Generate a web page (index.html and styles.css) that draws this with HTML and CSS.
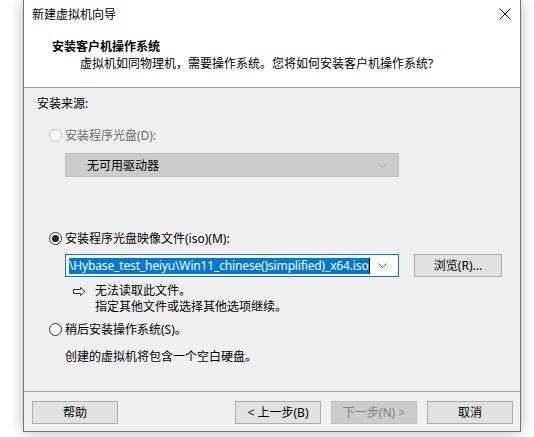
FILE: index.html
```html
<!DOCTYPE html>
<html lang="zh-CN">
<head>
<meta charset="utf-8">
<link rel="stylesheet" href="styles.css">
</head>
<body>
<div class="window">
  <div class="titlebar">
    <span class="title">新建虚拟机向导</span>
    <svg class="close" width="12" height="12" viewBox="0 0 12 12"><path d="M0.5 0.5 L11.5 11.5 M11.5 0.5 L0.5 11.5" stroke="#111" stroke-width="1" fill="none"/></svg>
  </div>
  <div class="header">
    <div class="h-title">安装客户机操作系统</div>
    <div class="h-sub">虚拟机如同物理机，需要操作系统。您将如何安装客户机操作系统?</div>
  </div>
  <div class="content">
    <div class="label">安装来源:</div>
    <div class="radio-row disabled r1">
      <span class="radio"></span><span>安装程序光盘(D):</span>
    </div>
    <div class="select disabled-select">
      <span class="sel-text">无可用驱动器</span>
      <svg class="chev" width="9" height="5" viewBox="0 0 9 5"><path d="M0.5 0.5 L4.5 4.5 L8.5 0.5" stroke="#a8a8a8" fill="none"/></svg>
    </div>
    <div class="radio-row r2">
      <span class="radio checked"></span><span>安装程序光盘映像文件(iso)(M):</span>
    </div>
    <div class="iso-row">
      <div class="combo">
        <span class="hl">\Hybase_test_heiyu\Win11_chinese()simplified)_x64.iso</span><span class="caret"></span>
        <svg class="chev" width="9" height="5" viewBox="0 0 9 5"><path d="M0.5 0.5 L4.5 4.5 L8.5 0.5" stroke="#606060" fill="none"/></svg>
      </div>
      <button class="btn browse">浏览(R)...</button>
    </div>
    <div class="msg">
      <svg class="arrow" width="13" height="9" viewBox="0 0 13 9"><path d="M0.5 2.5 H7.5 V0.5 L12 4.5 L7.5 8.5 V6.5 H0.5 Z" stroke="#333" stroke-width="1" fill="none" stroke-linejoin="miter"/></svg>
      <div class="msg-text">
        <div>无法读取此文件。</div>
        <div>指定其他文件或选择其他选项继续。</div>
      </div>
    </div>
    <div class="radio-row r3">
      <span class="radio"></span><span>稍后安装操作系统(S)。</span>
    </div>
    <div class="note">创建的虚拟机将包含一个空白硬盘。</div>
  </div>
  <div class="footer">
    <button class="btn">帮助</button>
    <div class="spacer"></div>
    <button class="btn">&lt; 上一步(B)</button>
    <button class="btn disabled-btn">下一步(N) &gt;</button>
    <button class="btn cancel">取消</button>
  </div>
</div>
</body>
</html>
```

FILE: styles.css
```css
* { box-sizing: border-box; }
html, body { margin: 0; padding: 0; background: #ffffff; }
body {
  font-family: "Noto Sans", "Noto Sans CJK SC", sans-serif;
  font-size: 12px;
  color: #000;
  width: 534px;
  height: 437px;
  overflow: hidden;
}
.window {
  margin-left: 23px;
  width: 498px;
  height: 432px;
  border: 1px solid #737373;
  border-top: none;
  display: flex;
  flex-direction: column;
  box-shadow: 0 0 14px rgba(0,0,0,0.28);
  background: #f0f0f0;
}
.titlebar {
  height: 30px;
  background: #fff;
  display: flex;
  align-items: center;
  padding-left: 8px;
  padding-right: 9px;
  justify-content: space-between;
}
.title { line-height: 16px; }
.close { margin-top: -2px; }
.header {
  height: 58px;
  background: #fff;
  border-bottom: 1px solid #a0a0a0;
  padding-top: 8px;
}
.h-title {
  font-weight: bold;
  line-height: 17px;
  padding-left: 28px;
}
.h-sub {
  line-height: 17px;
  padding-left: 56px;
}
.content {
  flex: 1;
  border-bottom: 1px solid #a0a0a0;
  padding: 7px 0 0 13px;
  display: flex;
  flex-direction: column;
  align-items: flex-start;
}
.label { line-height: 17px; }
.radio-row {
  display: flex;
  align-items: center;
  line-height: 17px;
  margin-left: 12px;
  gap: 3px;
}
.radio {
  width: 13px;
  height: 13px;
  border: 1px solid #333;
  border-radius: 50%;
  background: #fff;
  position: relative;
}
.radio.checked::after {
  content: "";
  position: absolute;
  left: 2px;
  top: 2px;
  width: 7px;
  height: 7px;
  border-radius: 50%;
  background: #222;
}
.disabled { color: #6d6d6d; }
.disabled .radio { border-color: #bcbcbc; }
.r1 { margin-top: 15px; }
.select {
  margin-left: 28px;
  margin-top: 9px;
  width: 334px;
  height: 24px;
  display: flex;
  align-items: center;
  justify-content: space-between;
  padding: 0 11px 0 21px;
}
.disabled-select {
  background: #cccccc;
  border: 1px solid #c2c2c2;
}
.r2 { margin-top: 53px; }
.iso-row {
  margin-left: 28px;
  margin-top: 7px;
  display: flex;
  align-items: center;
  gap: 15px;
}
.combo {
  width: 334px;
  height: 23px;
  background: #fff;
  border: 1px solid #0078d7;
  display: flex;
  align-items: center;
  padding-left: 3px;
  padding-right: 11px;
}
.hl {
  background: #0078d7;
  color: #fff;
  line-height: 16px;
  white-space: nowrap;
  letter-spacing: -0.15px;
}
.caret {
  width: 1px;
  height: 16px;
  background: #000;
}
.combo .chev { margin-left: auto; }
.btn {
  font: inherit;
  color: #000;
  background: #e1e1e1;
  border: 1px solid #adadad;
  height: 23px;
  width: 86px;
  padding: 0;
  line-height: 16px;
}
.browse { width: 88px; }
.msg {
  margin-left: 36px;
  margin-top: 6px;
  display: flex;
  align-items: flex-start;
  gap: 9px;
}
.arrow { margin-top: 4px; }
.msg-text { line-height: 16px; }
.r3 { margin-top: 6px; }
.note { margin-left: 28px; margin-top: 10px; line-height: 17px; }
.footer {
  height: 39px;
  display: flex;
  align-items: flex-start;
  padding: 9px 7px 0 8px;
  gap: 10px;
}
.spacer { flex: 1; }
.disabled-btn {
  background: #cccccc;
  border-color: #bfbfbf;
  color: #838383;
}
```
